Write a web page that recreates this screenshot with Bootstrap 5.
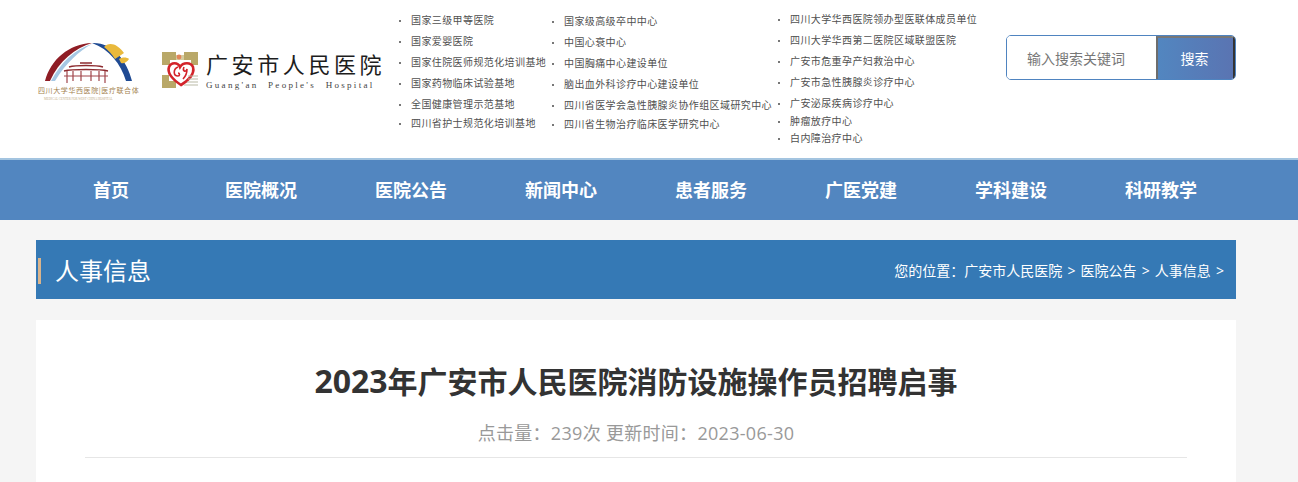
<!DOCTYPE html>
<html lang="zh-CN">
<head>
  <meta charset="UTF-8">
  <meta name="viewport" content="width=device-width, initial-scale=1.0">
  <title>2023年广安市人民医院消防设施操作员招聘启事</title>
  <link href="https://cdn.jsdelivr.net/npm/bootstrap@5.3.0/dist/css/bootstrap.min.css" rel="stylesheet">
  <style>
    body { background: #f5f5f5; font-family: "Open Sans", "Noto Sans CJK SC", sans-serif; overflow: hidden; }
    .site-top { height: 158px; background: #fff; padding-left: 36px; }
    .logo-one { width: 104px; margin-top: 38px; margin-left: 2px; }
    .logo-two { width: 230px; margin-top: 52px; margin-left: 20px; }
    .logo-text { margin-left: 8px; margin-top: -1px; }
    .logo-name { font-size: 22px; line-height: 26px; letter-spacing: 3.6px; color: #1d1d1d; white-space: nowrap; }
    .logo-en { font-size: 9px; line-height: 12px; margin-top: 2px; letter-spacing: 2.3px; word-spacing: 5px; color: #444; white-space: nowrap; font-family: "Liberation Serif", serif; }
    .honor-list { list-style: none; margin: 0; padding: 0; font-size: 10px; color: #505050; white-space: nowrap; letter-spacing: .4px; }
    .honor-list li { height: 21px; line-height: 14px; position: relative; padding-left: 13px; }
    .honor-list li::before { content: ""; position: absolute; left: 1px; top: 7px; width: 2px; height: 2px; background: #777; }
    .honor-a { width: 153px; margin-left: 6px; padding-top: 13px; }
    .honor-b { width: 226px; padding-top: 14px; }
    .honor-c { padding-top: 12px; width: 229px; }
    .honor-a li:nth-child(5), .honor-b li:nth-child(5) { height: 19px; }
    .honor-c li:nth-child(5) { height: 18px; }
    .honor-c li:nth-child(6) { height: 17px; }
    .search-box { width: 230px; height: 45px; margin-top: 35px; border: 1px solid #4f84c0; border-radius: 5px; overflow: hidden; background: #fff; }
    .search-input { width: 149px; border: 0; padding: 2px 0 0 20px; font-size: 14px; color: #777; outline: 0; }
    .search-input::placeholder { color: #777; opacity: 1; }
    .search-go { flex: 1; border: 0; border-left: 2px solid #6d6d6d; border-top: 2px solid #777; border-right: 2px solid #333; background: linear-gradient(90deg, #5286c0, #5a74b2); color: #fff; font-size: 14px; padding: 0 2px 0 0; }
    .main-nav { height: 62px; background: #5286c0; border-top: 2px solid #a3c4e0; padding-left: 36px; }
    .main-nav a { width: 150px; text-align: center; color: #fff; font-size: 18px; font-weight: 700; text-decoration: none; line-height: 60px; }
    .page-wrap { width: 1200px; margin-left: 36px; }
    .section-band { height: 59px; margin-top: 20px; background: #3579b5; color: #fff; }
    .section-name { font-size: 24px; line-height: 26px; padding-left: 14px; margin-left: 2px; margin-top: 3px; border-left: 3px solid #d9b48c; }
    .crumbs { font-size: 14px; padding-right: 12px; margin-top: 2px; word-spacing: 1.5px; }
    .article-box { margin-top: 21px; height: 300px; background: #fff; padding: 39px 49px 0; }
    .article-title { font-size: 30px; font-weight: 700; color: #333; text-align: center; line-height: 46px; height: 46px; margin: 0 0 15px; }
    .title-year { font-size: 32px; line-height: 1; }
    .article-info { font-size: 18px; color: #999; text-align: center; line-height: 26px; height: 38px; letter-spacing: .3px; border-bottom: 1px solid #e6e6e6; }
  </style>
</head>
<body>
  <header class="site-top d-flex">
    <div class="logo-one">
      <svg width="104" height="64" viewBox="0 0 104 64">
        <path d="M7 43C13 21 31 6 54 5C37 10 21 23 12 43Z" fill="#8f1d25"/>
        <path d="M13 43C23 24 37 11 54 6C41 13 28 25 17 43Z" fill="#a6c8e4"/>
        <path d="M54 5C74 4 89 22 94 43L88 43C83 26 71 11 54 5Z" fill="#1f4a93"/>
        <path d="M66 9C71 3 80 6 86 15L77 21C74 16 70 12 66 9Z" fill="#e9b93c"/>
        <path d="M81 21C84 19 89 19 91 21C89 24 86 26 83 25Z" fill="#e9b93c"/>
        <path d="M26 33C34 31 62 31 70 33M31 29C38 27 58 27 65 29M42 25H54" stroke="#8d2b2f" stroke-width="1.4" fill="none"/>
        <path d="M29 33V45M35 33V43M43 33V43M53 33V43M61 33V43M67 33V45" stroke="#a0454a" stroke-width="1.2" fill="none"/>
        <path d="M26 38H70" stroke="#a0454a" stroke-width="1"/>
        <text x="0" y="55" font-size="7" letter-spacing="0.6" fill="#a4824e" font-family="'Noto Sans CJK SC', sans-serif">四川大学华西医院|医疗联合体</text>
        <text x="6" y="61.5" font-size="3.1" fill="#c2ab86" font-family="'Liberation Serif', serif">MEDICAL CENTER FOR WEST CHINA HOSPITAL</text>
      </svg>
    </div>
    <div class="logo-two d-flex">
      <svg width="36" height="38" viewBox="0 0 36 38" class="flex-shrink-0">
        <path d="M0 0H14V8H8V13H0ZM22 0H36V13H29V8H22ZM0 23H7V29H14V36H0Z" fill="#b9a868"/>
        <path d="M14 3H22V8H14Z" fill="#d6cca0"/>
        <path d="M19 33C10 27 5 21 7 15C9 10 16 10 18 15C21 10 29 10 31 15C33 22 26 29 19 33Z" fill="none" stroke="#d3232a" stroke-width="2.6"/>
        <path d="M16 15C11 17 11 24 16 24C18 24 18 21 16 21M22 15C20 19 24 21 25 17C25 21 23 25 21 27" fill="none" stroke="#d3232a" stroke-width="1.6"/>
        <circle cx="17" cy="5" r="2.4" fill="#e2855a"/>
        <path d="M26 24H36M26 27H36M25 30H36M22 33H36" stroke="#b9b9a5" stroke-width="1"/>
      </svg>
      <div class="logo-text">
        <div class="logo-name">广安市人民医院</div>
        <div class="logo-en">Guang'an People's Hospital</div>
      </div>
    </div>
    <ul class="honor-list honor-a">
      <li>国家三级甲等医院</li>
      <li>国家爱婴医院</li>
      <li>国家住院医师规范化培训基地</li>
      <li>国家药物临床试验基地</li>
      <li>全国健康管理示范基地</li>
      <li>四川省护士规范化培训基地</li>
    </ul>
    <ul class="honor-list honor-b">
      <li>国家级高级卒中中心</li>
      <li>中国心衰中心</li>
      <li>中国胸痛中心建设单位</li>
      <li>脑出血外科诊疗中心建设单位</li>
      <li>四川省医学会急性胰腺炎协作组区域研究中心</li>
      <li>四川省生物治疗临床医学研究中心</li>
    </ul>
    <ul class="honor-list honor-c">
      <li>四川大学华西医院领办型医联体成员单位</li>
      <li>四川大学华西第二医院区域联盟医院</li>
      <li>广安市危重孕产妇救治中心</li>
      <li>广安市急性胰腺炎诊疗中心</li>
      <li>广安泌尿疾病诊疗中心</li>
      <li>肿瘤放疗中心</li>
      <li>白内障治疗中心</li>
    </ul>
    <form class="search-box d-flex">
      <input class="search-input" type="text" placeholder="输入搜索关键词">
      <button class="search-go" type="button">搜索</button>
    </form>
  </header>

  <nav class="main-nav d-flex">
    <a href="#">首页</a>
    <a href="#">医院概况</a>
    <a href="#">医院公告</a>
    <a href="#">新闻中心</a>
    <a href="#">患者服务</a>
    <a href="#">广医党建</a>
    <a href="#">学科建设</a>
    <a href="#">科研教学</a>
  </nav>

  <div class="page-wrap">
    <div class="section-band d-flex align-items-center justify-content-between">
      <div class="section-name">人事信息</div>
      <div class="crumbs">您的位置：广安市人民医院 &gt; 医院公告 &gt; 人事信息 &gt;</div>
    </div>
    <div class="article-box">
      <h1 class="article-title"><span class="title-year">2023</span>年广安市人民医院消防设施操作员招聘启事</h1>
      <div class="article-info">点击量：239次 更新时间：2023-06-30</div>
    </div>
  </div>
  <script src="https://cdn.jsdelivr.net/npm/bootstrap@5.3.0/dist/js/bootstrap.bundle.min.js"></script>
</body>
</html>
